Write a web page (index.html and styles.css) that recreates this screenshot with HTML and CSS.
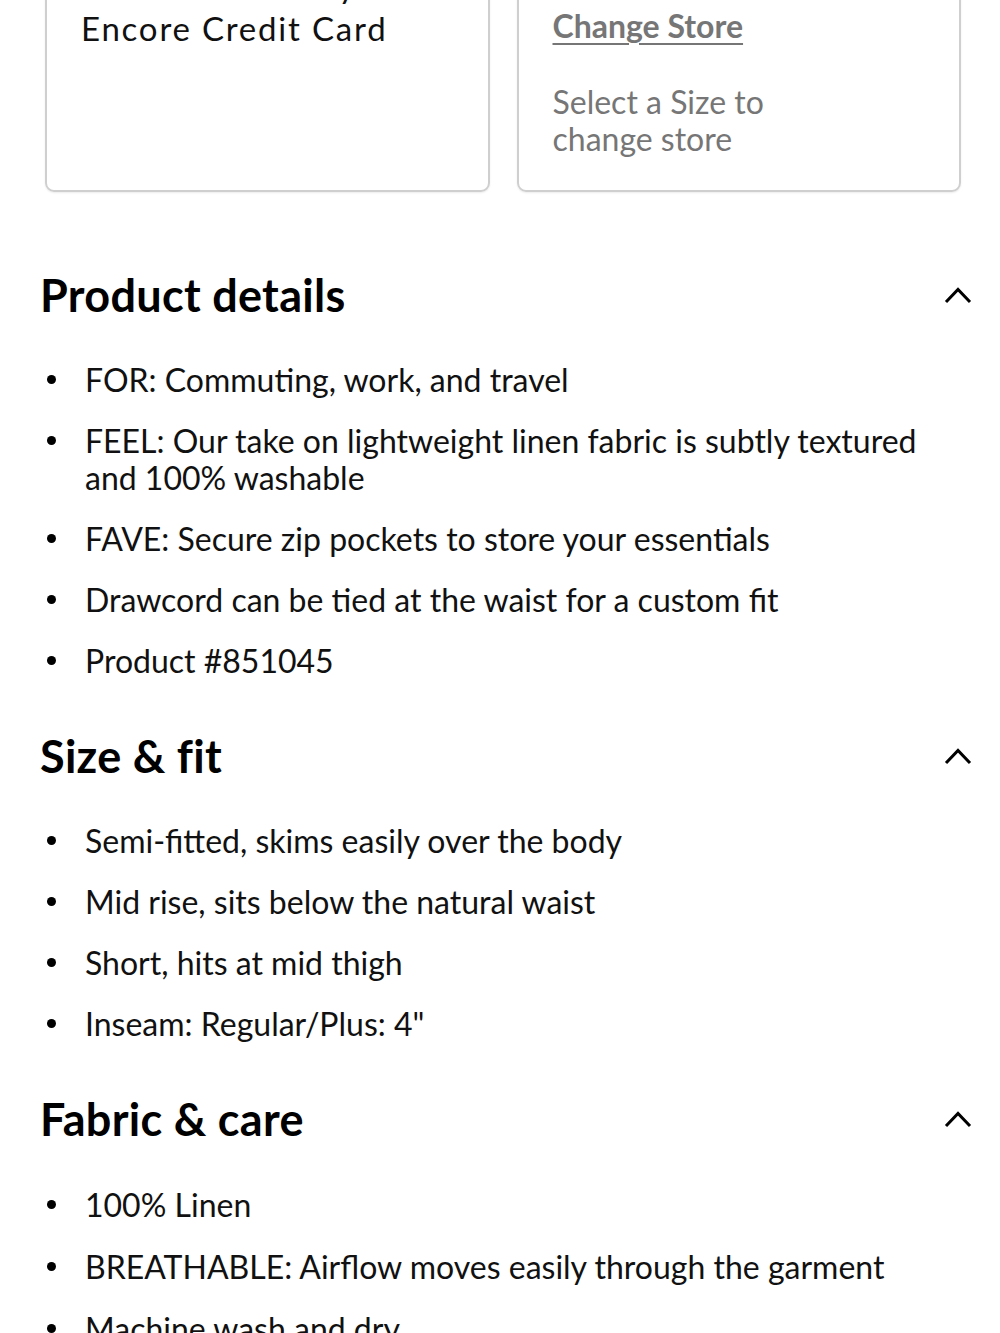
FILE: index.html
```html
<!DOCTYPE html>
<html lang="en">
<head>
<meta charset="utf-8">
<title>Product</title>
<link rel="stylesheet" href="styles.css">
</head>
<body>
<main class="page">
  <div class="cards">
    <div class="card">
      <p class="card-text"><span class="card-line card-line-first">Save more with your</span><span class="card-line">Encore Credit Card</span></p>
    </div>
    <div class="card card-store">
      <p class="store-name">Pickup in store</p>
      <a class="change-store" href="#">Change Store</a>
      <p class="store-note">Select a Size to change store</p>
    </div>
  </div>

  <section class="section">
    <div class="section-head">
      <h2 class="section-title">Product details</h2>
      <svg class="chevron" viewBox="0 0 30 18" width="30" height="18"><polyline points="3,16 15,3.5 27,16" fill="none" stroke="#000" stroke-width="3"/></svg>
    </div>
    <ul class="bullets">
      <li>FOR: Commuting, work, and travel</li>
      <li>FEEL: Our take on lightweight linen fabric is subtly textured and 100% washable</li>
      <li>FAVE: Secure zip pockets to store your essentials</li>
      <li>Drawcord can be tied at the waist for a custom fit</li>
      <li>Product #851045</li>
    </ul>
  </section>

  <section class="section">
    <div class="section-head">
      <h2 class="section-title">Size &amp; fit</h2>
      <svg class="chevron" viewBox="0 0 30 18" width="30" height="18"><polyline points="3,16 15,3.5 27,16" fill="none" stroke="#000" stroke-width="3"/></svg>
    </div>
    <ul class="bullets">
      <li>Semi-fitted, skims easily over the body</li>
      <li>Mid rise, sits below the natural waist</li>
      <li>Short, hits at mid thigh</li>
      <li>Inseam: Regular/Plus: 4"</li>
    </ul>
  </section>

  <section class="section">
    <div class="section-head">
      <h2 class="section-title">Fabric &amp; care</h2>
      <svg class="chevron" viewBox="0 0 30 18" width="30" height="18"><polyline points="3,16 15,3.5 27,16" fill="none" stroke="#000" stroke-width="3"/></svg>
    </div>
    <ul class="bullets bullets-loose">
      <li>100% Linen</li>
      <li>BREATHABLE: Airflow moves easily through the garment</li>
      <li>Machine wash and dry</li>
      <li>Imported</li>
    </ul>
  </section>
</main>
</body>
</html>
```

FILE: styles.css
```css
html, body {
  margin: 0;
  padding: 0;
  background: #fff;
}
body {
  font-family: "Lato", "Open Sans", sans-serif;
  color: #111;
  overflow: hidden;
}
.page {
  padding: 0 27px 0 40px;
}
.cards {
  display: grid;
  grid-template-columns: 1fr 1fr;
  gap: 27px;
  margin: -66px 12px 0 5px;
}
.card {
  border: 2px solid #cfcfcf;
  border-radius: 9px;
  padding: 30px 34px 33px 34px;
  box-shadow: 0 1px 2px rgba(0,0,0,0.08);
}
.card-store {
  padding-top: 20px;
}
.card-text {
  margin: 1px 0 0;
  font-size: 33px;
  line-height: 37px;
  letter-spacing: 1.8px;
}
.card-line {
  display: block;
  white-space: nowrap;
}
.card-line-first {
  margin-bottom: 6px;
}
.store-name {
  margin: 0 0 14px;
  font-size: 32px;
  line-height: 37px;
  color: #111;
}
.change-store {
  display: block;
  width: max-content;
  font-size: 32px;
  line-height: 37px;
  font-weight: 700;
  color: #767676;
  text-decoration: underline;
  text-underline-offset: 5px;
  text-decoration-thickness: 2px;
}
.store-note {
  margin: 39px 0 0;
  max-width: 300px;
  font-size: 32px;
  line-height: 37px;
  color: #767676;
}
.section {
  margin-top: 78px;
}
.section + .section {
  margin-top: 52px;
}
.section-head {
  display: flex;
  align-items: center;
  justify-content: space-between;
}
.section-title {
  margin: 0;
  font-size: 45px;
  line-height: 50px;
  font-weight: 700;
  letter-spacing: 0.3px;
  color: #000;
}
.chevron {
  display: block;
}
.bullets {
  list-style: none;
  margin: 41px 33px 0 0;
  padding: 0;
  display: flex;
  flex-direction: column;
  gap: 24px;
}
.bullets-loose {
  margin-top: 42px;
  gap: 25px;
}
.bullets li {
  display: flex;
  font-size: 32px;
  line-height: 37px;
}
.bullets li::before {
  content: "";
  flex: none;
  width: 9px;
  height: 9px;
  border-radius: 50%;
  background: #000;
  margin: 14px 29px 0 7px;
}
```
